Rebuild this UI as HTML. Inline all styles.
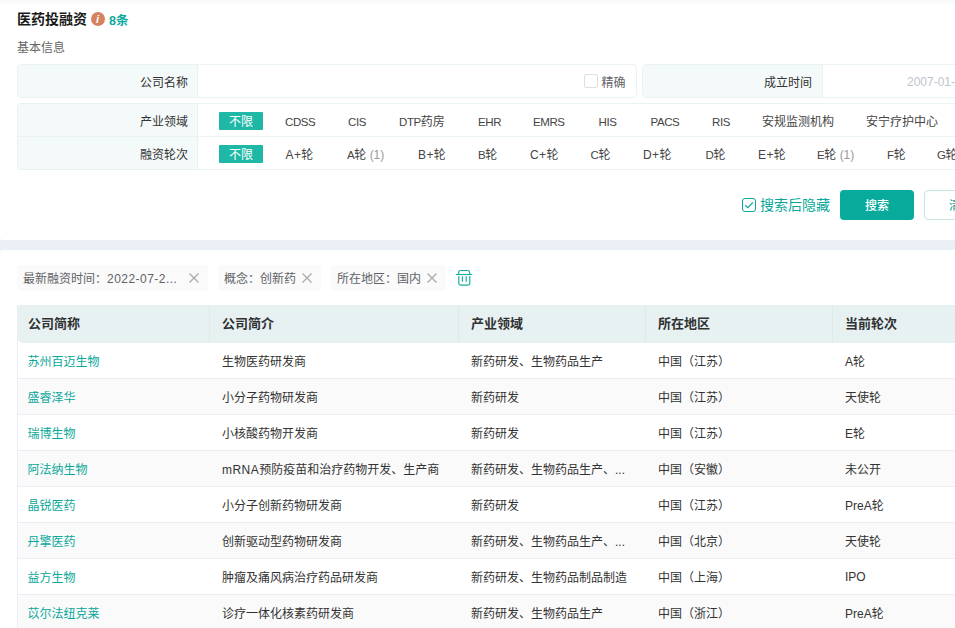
<!DOCTYPE html>
<html lang="zh-CN">
<head>
<meta charset="utf-8">
<title>医药投融资</title>
<style>
*{box-sizing:border-box;margin:0;padding:0}
html,body{width:955px;height:628px;overflow:hidden;background:#fff}
body{font-family:"Liberation Sans","Noto Sans CJK SC",sans-serif;font-size:12px;color:#333;position:relative}
.abs{position:absolute}
.topshade{left:0;top:0;width:955px;height:6px;background:linear-gradient(#f7f9f9,#fff)}
.title{left:17px;top:9px;height:20px;line-height:20px;font-size:14px;font-weight:bold;color:#1a1a1a;white-space:nowrap}
.info{left:91px;top:12px;width:14px;height:14px;border-radius:50%;background:#d4835f;color:#fff;font-family:"Liberation Sans",sans-serif;font-style:italic;font-weight:bold;font-size:11px;line-height:14px;text-align:center;padding-right:1px}
.count{left:109px;top:11px;height:20px;line-height:20px;font-size:12.5px;font-weight:bold;color:#0aa89a;white-space:nowrap}
.sub{left:17px;top:38px;height:20px;line-height:20px;color:#666;white-space:nowrap}
.box{border:1px solid #ebf2f2;border-radius:4px;background:#fff;overflow:hidden}
.lab{background:#f4f9f9;border-right:1px solid #ebf2f2;text-align:right;padding-right:9px;color:#333;white-space:nowrap}
.row{position:relative;height:33px;line-height:33px}
.it{position:absolute;top:0;height:33px;line-height:37px;white-space:nowrap;color:#444}
.it .n{color:#999}
.l{font-size:11.5px;letter-spacing:-0.4px}
.p{letter-spacing:0.4px}
.tag{position:absolute;left:201px;width:44px;height:18px;line-height:20px;background:#1fb8a6;color:#fff;text-align:center;border-radius:1px}
.cb{width:14px;height:14px;border:1px solid #dcdfe6;border-radius:2px;background:#fff}
.band{left:0;top:240px;width:955px;height:10px;background:#ebeff6}
.ftag{top:265px;height:26px;line-height:28px;background:#fafafa;border-radius:4px;color:#606266;white-space:nowrap;padding-left:6px}
.x{position:absolute;top:7.5px;width:10px;height:10px}
table{border-collapse:separate;border-spacing:0;table-layout:fixed}
th{height:38px;background:#e8f1f2;text-align:left;font-size:13px;font-weight:bold;color:#303133;padding:0 0 4px 10px;border-right:1px solid #dfeaeb;white-space:nowrap}
td{height:36px;padding:0 0 0 10px;border-bottom:1px solid #ebeef5;color:#333;white-space:nowrap;overflow:hidden}
tbody tr:nth-child(even) td{background:#fafafa}
td.lk{color:#0aa89a;padding-left:9.4px}
th:nth-child(n+2),td:nth-child(n+2){padding-left:12px}
th:first-child{border-radius:2px 0 0 5px}
</style>
</head>
<body>
<div class="abs topshade"></div>
<div class="abs title">医药投融资</div>
<div class="abs info">i</div>
<div class="abs count">8条</div>
<div class="abs sub">基本信息</div>

<!-- 公司名称 -->
<div class="abs box" style="left:17px;top:64px;width:620px;height:34px">
  <div class="abs lab" style="left:0;top:0;width:180px;height:32px;line-height:36px">公司名称</div>
  <div class="abs cb" style="left:566px;top:9px"></div>
  <div class="abs" style="left:583.5px;top:0;line-height:36px;color:#606266">精确</div>
</div>
<!-- 成立时间 -->
<div class="abs box" style="left:642px;top:64px;width:620px;height:34px">
  <div class="abs lab" style="left:0;top:0;width:180px;height:32px;line-height:36px;padding-right:10px">成立时间</div>
  <div class="abs" style="left:264px;top:0;line-height:34px;color:#c0c4cc;white-space:nowrap">2007-01-01</div>
</div>

<!-- 产业领域 / 融资轮次 -->
<div class="abs box" style="left:17px;top:103px;width:1245px;height:67px">
  <div class="row" style="border-bottom:1px solid #ebf2f2">
    <div class="abs lab" style="left:0;top:0;width:180px;height:32px;line-height:36px">产业领域</div>
    <div class="tag" style="top:8px">不限</div>
    <span class="it" style="left:267px"><span class="l">CDSS</span></span>
    <span class="it" style="left:330px"><span class="l">CIS</span></span>
    <span class="it" style="left:381px"><span class="l">DTP</span>药房</span>
    <span class="it" style="left:460px"><span class="l">EHR</span></span>
    <span class="it" style="left:515px"><span class="l">EMRS</span></span>
    <span class="it" style="left:580.5px"><span class="l">HIS</span></span>
    <span class="it" style="left:632.5px"><span class="l">PACS</span></span>
    <span class="it" style="left:694px"><span class="l">RIS</span></span>
    <span class="it" style="left:744px">安规监测机构</span>
    <span class="it" style="left:848px">安宁疗护中心</span>
  </div>
  <div class="row">
    <div class="abs lab" style="left:0;top:0;width:180px;height:33px;line-height:36px">融资轮次</div>
    <div class="tag" style="top:8px">不限</div>
    <span class="it" style="left:267.5px"><span class="p">A+</span>轮</span>
    <span class="it" style="left:329px"><span class="l">A</span>轮 <span class="n">(1)</span></span>
    <span class="it" style="left:400px"><span class="p">B+</span>轮</span>
    <span class="it" style="left:460px"><span class="l">B</span>轮</span>
    <span class="it" style="left:512px"><span class="p">C+</span>轮</span>
    <span class="it" style="left:572.5px"><span class="l">C</span>轮</span>
    <span class="it" style="left:625px"><span class="p">D+</span>轮</span>
    <span class="it" style="left:687.5px"><span class="l">D</span>轮</span>
    <span class="it" style="left:740px"><span class="p">E+</span>轮</span>
    <span class="it" style="left:799px"><span class="l">E</span>轮 <span class="n">(1)</span></span>
    <span class="it" style="left:869px"><span class="l">F</span>轮</span>
    <span class="it" style="left:919px"><span class="l">G</span>轮</span>
  </div>
</div>

<!-- search row -->
<div class="abs" style="left:742px;top:198px;width:14px;height:14px;border:1px solid #0aa89a;border-radius:3px;background:#fff">
  <svg width="12" height="12" viewBox="0 0 12 12" style="display:block"><path d="M2.2 6.2 L4.9 8.7 L9.9 3.4" fill="none" stroke="#0aa89a" stroke-width="1.2"/></svg>
</div>
<div class="abs" style="left:760px;top:195px;height:20px;line-height:20px;font-size:14px;color:#0aa89a;white-space:nowrap">搜索后隐藏</div>
<div class="abs" style="left:840px;top:190px;width:74px;height:30px;line-height:32px;background:#08ab9b;color:#fff;border-radius:4px;text-align:center;font-weight:500">搜索</div>
<div class="abs" style="left:924px;top:190px;width:74px;height:30px;line-height:30px;border:1px solid #c5e6e2;color:#0aa89a;border-radius:4px;text-align:center;background:#fff">清空</div>

<div class="abs band"></div>
<div class="abs" style="left:0;top:237px;width:3px;height:3px;background:#ebeff6"><div style="width:3px;height:3px;background:#fff;border-bottom-left-radius:2.5px"></div></div>
<div class="abs" style="left:0;top:250px;width:3px;height:3px;background:#ebeff6"><div style="width:3px;height:3px;background:#fff;border-top-left-radius:2.5px"></div></div>

<!-- filter tags -->
<div class="abs ftag" style="left:17px;width:191px">最新融资时间：<span style="letter-spacing:.47px">2022-07-2...</span><svg class="x" style="left:172px" viewBox="0 0 10 10"><path d="M0.5 0.5L9.5 9.5M9.5 0.5L0.5 9.5" stroke="#ababab" stroke-width="1.3" fill="none"/></svg></div>
<div class="abs ftag" style="left:218px;width:103px">概念：创新药<svg class="x" style="left:84px" viewBox="0 0 10 10"><path d="M0.5 0.5L9.5 9.5M9.5 0.5L0.5 9.5" stroke="#ababab" stroke-width="1.3" fill="none"/></svg></div>
<div class="abs ftag" style="left:331px;width:115px">所在地区：国内<svg class="x" style="left:96px" viewBox="0 0 10 10"><path d="M0.5 0.5L9.5 9.5M9.5 0.5L0.5 9.5" stroke="#ababab" stroke-width="1.3" fill="none"/></svg></div>
<svg class="abs" style="left:455px;top:269px" width="18" height="18" viewBox="0 0 18 18"><g fill="none" stroke="#14ada0" stroke-width="1.15"><path d="M1 5.5H17.2"/><path d="M3.7 5.5V3.3Q3.7 1.5 5.5 1.5H12.8Q14.6 1.5 14.6 3.3V5.5"/><path d="M3.8 7V14.3Q3.8 16.1 5.6 16.1H13Q14.8 16.1 14.8 14.3V7"/><path d="M7.4 7.2V12.7M11.2 7.2V12.7"/></g></svg>

<!-- table -->
<div class="abs" style="left:17px;top:305px;width:1000px;border-left:1px solid #ebeef5">
<table style="width:1000px">
<colgroup><col style="width:192px"><col style="width:249px"><col style="width:187px"><col style="width:187px"><col style="width:185px"></colgroup>
<thead><tr><th>公司简称</th><th>公司简介</th><th>产业领域</th><th>所在地区</th><th>当前轮次</th></tr></thead>
<tbody>
<tr><td class="lk">苏州百迈生物</td><td>生物医药研发商</td><td>新药研发、生物药品生产</td><td>中国（江苏）</td><td>A轮</td></tr>
<tr><td class="lk">盛睿泽华</td><td>小分子药物研发商</td><td>新药研发</td><td>中国（江苏）</td><td>天使轮</td></tr>
<tr><td class="lk">瑞博生物</td><td>小核酸药物开发商</td><td>新药研发</td><td>中国（江苏）</td><td>E轮</td></tr>
<tr><td class="lk">阿法纳生物</td><td><span style="letter-spacing:.45px">mRNA</span>预防疫苗和治疗药物开发、生产商</td><td>新药研发、生物药品生产、...</td><td>中国（安徽）</td><td>未公开</td></tr>
<tr><td class="lk">晶锐医药</td><td>小分子创新药物研发商</td><td>新药研发</td><td>中国（江苏）</td><td>PreA轮</td></tr>
<tr><td class="lk">丹擎医药</td><td>创新驱动型药物研发商</td><td>新药研发、生物药品生产、...</td><td>中国（北京）</td><td>天使轮</td></tr>
<tr><td class="lk">益方生物</td><td>肿瘤及痛风病治疗药品研发商</td><td>新药研发、生物药品制品制造</td><td>中国（上海）</td><td>IPO</td></tr>
<tr><td class="lk">苡尔法纽克莱</td><td>诊疗一体化核素药研发商</td><td>新药研发、生物药品生产</td><td>中国（浙江）</td><td>PreA轮</td></tr>
</tbody>
</table>
</div>
</body>
</html>
